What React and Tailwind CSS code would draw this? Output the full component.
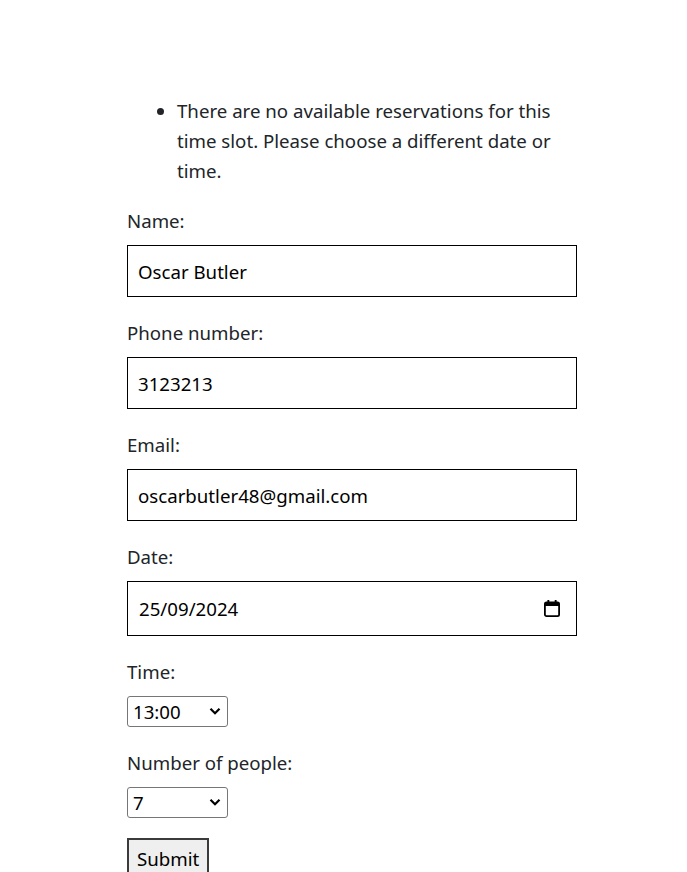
import React from "react";

function CalendarIcon() {
  return (
    <svg width="18" height="19" viewBox="0 0 18 19" className="shrink-0 text-black">
      <rect x="1.9" y="3.4" width="14.2" height="13.8" rx="1.6" fill="none" stroke="currentColor" strokeWidth="1.8" />
      <rect x="1.9" y="3.4" width="14.2" height="3.6" fill="currentColor" />
      <rect x="4.4" y="1" width="1.9" height="3" fill="currentColor" />
      <rect x="11.7" y="1" width="1.9" height="3" fill="currentColor" />
    </svg>
  );
}

function Chevron() {
  return (
    <svg
      width="12"
      height="9"
      viewBox="0 0 12 9"
      className="absolute right-[7px] top-[11px] pointer-events-none text-black"
    >
      <path d="M1.5 1.8 L6 6.3 L10.5 1.8" fill="none" stroke="currentColor" strokeWidth="2.2" />
    </svg>
  );
}

function Field({ label, children }) {
  return (
    <div className="mb-[21px]">
      <label className="block leading-[30px] mb-[9px]">{label}</label>
      {children}
    </div>
  );
}

function Select({ value, options }) {
  return (
    <div className="relative w-[101px]">
      <select
        className="block w-full h-[31px] appearance-none border border-[#767676] rounded-[3px] pl-[5px] text-black bg-white"
        defaultValue={value}
      >
        {options.map((o) => (
          <option key={o}>{o}</option>
        ))}
      </select>
      <Chevron />
    </div>
  );
}

const inputCls =
  "block w-full h-[52px] border border-black px-[10px] text-black bg-white outline-none";

export default function App() {
  return (
    <div
      className="min-h-screen bg-white text-[#212529] text-[18.67px]"
      style={{ fontFamily: '"Noto Sans", "Open Sans", sans-serif' }}
    >
      <form className="ml-[127px] w-[450px] pt-[96px]">
        <ul className="list-disc pl-[50px] mb-[20px] leading-[30px]">
          <li>
            There are no available reservations for this time slot. Please
            choose a different date or time.
          </li>
        </ul>

        <Field label="Name:">
          <input className={inputCls} defaultValue="Oscar Butler" />
        </Field>

        <Field label="Phone number:">
          <input className={inputCls} defaultValue="3123213" />
        </Field>

        <Field label="Email:">
          <input className={inputCls} defaultValue="oscarbutler48@gmail.com" />
        </Field>

        <Field label="Date:">
          <div className="flex items-center h-[55px] border border-black pl-[11px] pr-[15px] bg-white">
            <input
              className="flex-1 min-w-0 text-black outline-none bg-transparent"
              defaultValue="25/09/2024"
            />
            <CalendarIcon />
          </div>
        </Field>

        <Field label="Time:">
          <Select value="13:00" options={["12:00", "13:00", "14:00", "15:00"]} />
        </Field>

        <Field label="Number of people:">
          <Select value="7" options={["1", "2", "3", "4", "5", "6", "7", "8"]} />
        </Field>

        <button
          type="submit"
          className="block -mt-px border-2 border-[#3b3b3b] bg-[#efefef] px-[8px] py-[4px] text-black leading-[30px]"
        >
          Submit
        </button>
      </form>
    </div>
  );
}
